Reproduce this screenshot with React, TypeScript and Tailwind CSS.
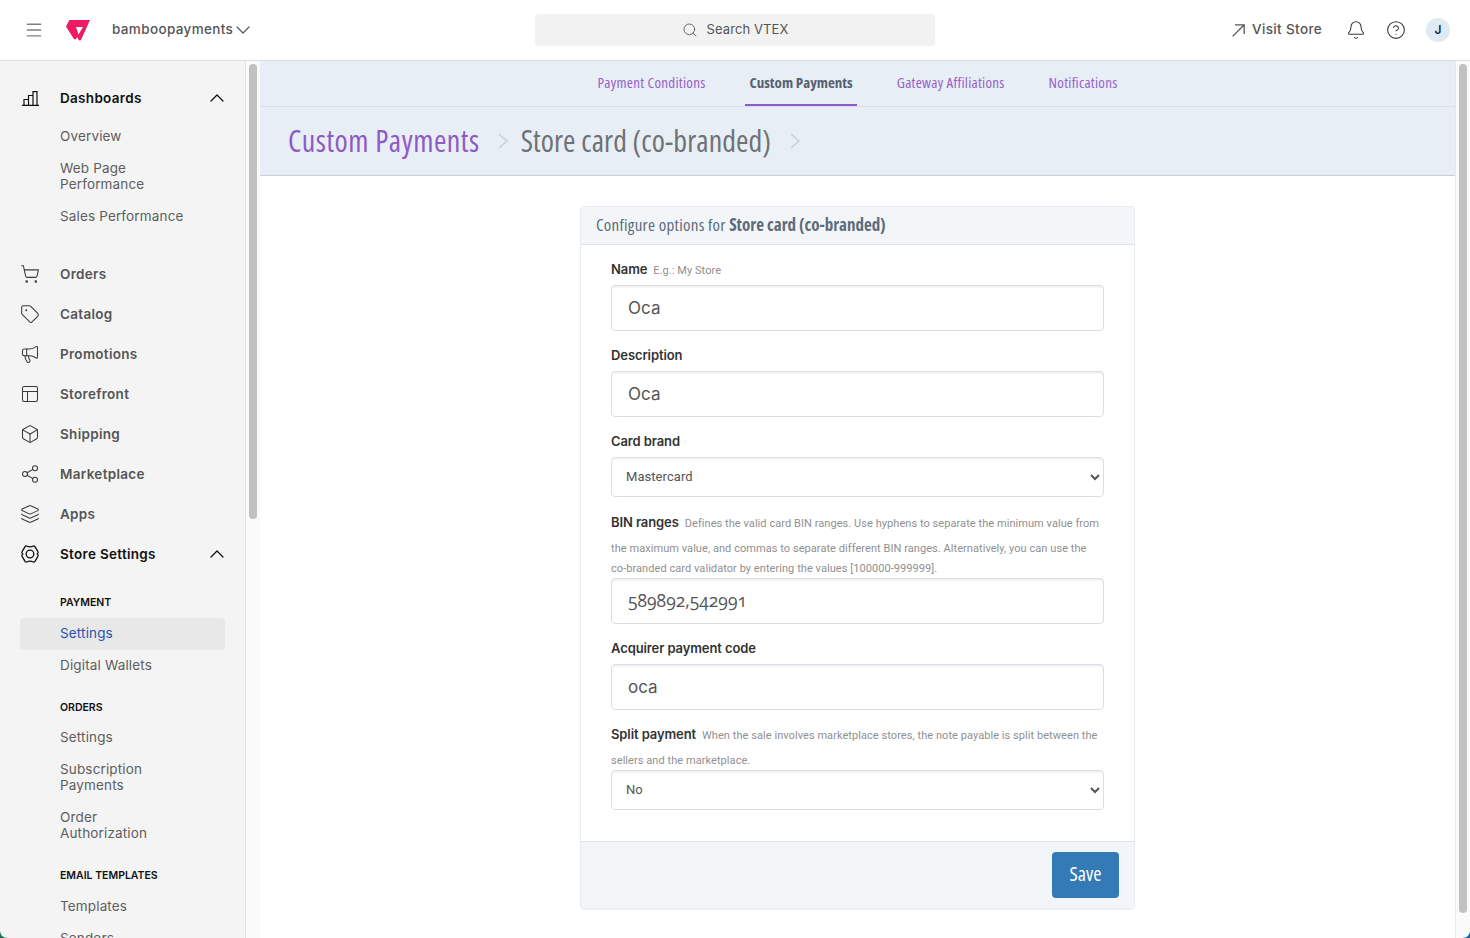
import React from "react";
import { ShoppingCart, Tag, Megaphone, Box, Share2, Layers, ChevronUp, ChevronDown, Search, Bell, CircleHelp, Menu, PanelsTopLeft } from "lucide-react";

const trust = "font-['Inter','Liberation_Sans',sans-serif]";
const narrow = "font-['Open_Sans',sans-serif] [font-stretch:75%]";
const narrowBold = "font-bold tracking-normal";
const hintFont = "font-['Roboto','Liberation_Sans',sans-serif] tracking-[0.06px]";
const labelCls = "mr-[6px] text-[13px] font-semibold tracking-[-0.1px] text-[#333]";

function BarsIcon() {
  return (
    <svg className="ml-[1.5px]" width="17" height="15" viewBox="0 0 17 15" fill="none" stroke="#111" strokeWidth="1.2">
      <path d="M0 14.4H17M2 14.4V8.5H6.5V14.4M6.5 14.4V4.5H11V14.4M11 14.4V0.6H15V14.4" />
    </svg>
  );
}

function Logo() {
  return (
    <svg width="24" height="21" viewBox="0 0 24 21">
      <path
        fill="#f01a5f"
        fillRule="evenodd"
        d="M3.4 0H24L15.2 19.4C14.6 20.8 13 20.8 12.4 19.4L11.2 17 10 19C9.5 19.6 8.2 19.6 7.6 18.6L0 6.6ZM10 7L12.5 14.5 17 7Z"
      />
    </svg>
  );
}

function NavRow({ icon, label, strong, open }: { icon: React.ReactNode; label: string; strong?: boolean; open?: boolean }) {
  return (
    <div className="flex h-10 items-center pl-5 pr-4">
      <span className={`flex w-10 shrink-0 items-center ${strong ? "text-[#111]" : "text-[#3a3a3a]"}`}>{icon}</span>
      <span className={`flex-1 text-[13.5px] font-semibold tracking-[0.3px] ${strong ? "text-[#111]" : "text-[#555]"}`}>{label}</span>
      {open && <ChevronUp size={24} strokeWidth={1.3} className="text-[#111]" />}
    </div>
  );
}

function Sub({ children, active, up }: { children: React.ReactNode; active?: boolean; up?: boolean }) {
  return (
    <div className={`ml-5 mr-5 rounded pl-10 text-[13.5px] leading-4 tracking-[0.15px] ${up ? "pb-[9px] pt-[7px]" : "py-2"} ${active ? "bg-[#e8e8e8] text-[#2953b2]" : "text-[#5e5e5e]"}`}>
      {children}
    </div>
  );
}

function SectionLabel({ children, cls }: { children: React.ReactNode; cls: string }) {
  return <div className={`pl-[60px] text-[10.5px] font-semibold leading-4 text-[#111] ${cls}`}>{children}</div>;
}

function Sidebar() {
  const ic = { size: 20, strokeWidth: 1.25 };
  return (
    <aside className={`flex w-[260px] shrink-0 overflow-hidden ${trust}`}>
      <div className="w-[246px] shrink-0 overflow-hidden border-r border-[#e3e3e3] bg-[#f4f4f4] pt-[17px]">
        <NavRow icon={<BarsIcon />} label="Dashboards" strong open />
        <div className="mt-0.5">
          <Sub>Overview</Sub>
          <Sub>Web Page<br />Performance</Sub>
          <Sub>Sales Performance</Sub>
        </div>
        <div className="mt-[22px]">
          <NavRow icon={<ShoppingCart {...ic} />} label="Orders" />
          <NavRow icon={<Tag {...ic} />} label="Catalog" />
          <NavRow icon={<Megaphone {...ic} />} label="Promotions" />
          <NavRow icon={<PanelsTopLeft {...ic} />} label="Storefront" />
          <NavRow icon={<Box {...ic} />} label="Shipping" />
          <NavRow icon={<Share2 {...ic} />} label="Marketplace" />
          <NavRow icon={<Layers {...ic} />} label="Apps" />
          <NavRow
            icon={
              <svg width="20" height="20" viewBox="0 0 20 20" fill="none" stroke="#111" strokeWidth="1.3">
                <path d="M7.3 2.2C8.5 3 11.5 3 12.7 2.2 13.6 1.7 14.6 2 15.1 2.8L17.9 7.6C18.4 8.4 18.2 9.1 17.6 9.6 17 10 17 10 17.6 10.4 18.2 10.9 18.4 11.6 17.9 12.4L15.1 17.2C14.6 18 13.6 18.3 12.7 17.8 11.5 17 8.5 17 7.3 17.8 6.4 18.3 5.4 18 4.9 17.2L2.1 12.4C1.6 11.6 1.8 10.9 2.4 10.4 3 10 3 10 2.4 9.6 1.8 9.1 1.6 8.4 2.1 7.6L4.9 2.8C5.4 2 6.4 1.7 7.3 2.2Z" />
                <circle cx="10" cy="10" r="3.8" />
              </svg>
            }
            label="Store Settings"
            strong
            open
          />
        </div>
        <SectionLabel cls="pt-[21px] pb-[7px]">PAYMENT</SectionLabel>
        <Sub active up>Settings</Sub>
        <Sub up>Digital Wallets</Sub>
        <SectionLabel cls="pt-[18px] pb-[5px]">ORDERS</SectionLabel>
        <Sub>Settings</Sub>
        <Sub>Subscription<br />Payments</Sub>
        <Sub>Order<br />Authorization</Sub>
        <SectionLabel cls="pt-[19px] pb-[6px]">EMAIL TEMPLATES</SectionLabel>
        <Sub>Templates</Sub>
        <Sub>Senders</Sub>
      </div>
      <div className="w-[14px] shrink-0 bg-[#fafafa] pl-[3px] pt-[3px]">
        <div className="h-[455px] w-2 rounded-full bg-[#c1c1c1]" />
      </div>
    </aside>
  );
}

function Header() {
  return (
    <header className={`flex h-[61px] shrink-0 items-center border-b border-[#dedede] bg-white ${trust}`}>
      <div className="flex w-[535px] shrink-0 items-center">
        <Menu size={20} strokeWidth={1.7} className="ml-6 text-[#808080]" />
        <span className="ml-[22px] flex"><Logo /></span>
        <span className="-mt-px ml-[22px] text-[13.5px] font-medium tracking-[0.35px] text-[#555]">bamboopayments</span>
        <ChevronDown size={24} strokeWidth={1.2} className="-ml-0.5 text-[#555]" />
      </div>
      <div className="flex h-8 w-[400px] items-center justify-center gap-[9px] rounded bg-[#f2f2f2] text-[13px] text-[#555]">
        <Search size={16} strokeWidth={1.3} />
        <span className="-mt-px tracking-[0.1px]">Search VTEX</span>
      </div>
      <div className="flex flex-1 items-center justify-end pr-5 text-[#555]">
        <svg width="13" height="13" viewBox="0 0 13 13" fill="none" stroke="#555" strokeWidth="1.3">
          <path d="M0.6 12.4L12.2 0.8M3 0.8H12.2V10" />
        </svg>
        <span className="-mt-px ml-[7px] text-[13.5px] font-medium tracking-[0.35px]">Visit Store</span>
        <Bell size={20} strokeWidth={1.3} className="ml-6 text-[#3a3a3a]" />
        <CircleHelp size={20} strokeWidth={1.3} className="ml-5 text-[#3a3a3a]" />
        <span className="ml-5 flex h-6 w-6 items-center justify-center rounded-full bg-[#dfeaf5] text-xs font-semibold text-[#142f5c]">J</span>
      </div>
    </header>
  );
}

function Tab({ children, active }: { children: React.ReactNode; active?: boolean }) {
  return (
    <div className={`flex h-[45px] items-center border-b-2 px-1 text-[15px] ${active ? `border-[#8e5bc4] text-[#546170] ${narrowBold}` : "border-transparent tracking-[0.27px] text-[#9461c9]"}`}>
      {children}
    </div>
  );
}

function Label({ title, hint, cls = "" }: { title: string; hint?: string; cls?: string }) {
  return (
    <div className={`text-[11px] text-[#909090] ${hintFont} ${cls}`}>
      <span className={`${labelCls} ${trust}`}>{title}</span>
      {hint}
    </div>
  );
}

function TextInput({ value, cls = "text-[17px]" }: { value: string; cls?: string }) {
  return (
    <input
      readOnly
      value={value}
      className={`block h-[46px] w-full rounded border border-[#d8dfe6] bg-white px-4 text-[#555] shadow-[inset_0_2px_1px_#f3f3f3] outline-none ${cls}`}
    />
  );
}

function SelectBox({ value }: { value: string }) {
  return (
    <select
      value={value}
      onChange={() => {}}
      className={`block h-10 w-full appearance-auto rounded border border-[#d8dfe6] bg-white pb-0.5 pl-[10px] text-[13px] text-[#555] shadow-[inset_0_2px_1px_#f3f3f3] outline-none ${hintFont}`}
    >
      <option>{value}</option>
    </select>
  );
}

function Card() {
  return (
    <div className={`w-[555px] self-start overflow-hidden rounded border border-[#e6ecf2] shadow-[0_1px_1px_#eef1f4] ${trust}`}>
      <div className={`flex h-[38px] items-center border-b border-[#dde4ec] bg-[#f3f6f9] px-[15px] pb-px text-[17px] tracking-[0.28px] text-[#5d6b7a] ${narrow}`}>
        Configure options for&nbsp;<b className={narrowBold}>Store card (co-branded)</b>
      </div>
      <div className="h-[596px] px-[30px] pt-[15px]">
        <Label title="Name" hint="E.g.: My Store" cls="h-6 leading-[18px]" />
        <TextInput value="Oca" cls="mt-px text-[17px]" />
        <Label title="Description" cls="mt-[15px] h-[25px] leading-[18px]" />
        <TextInput value="Oca" />
        <Label title="Card brand" cls="mt-[15px] h-[25px] leading-[18px]" />
        <SelectBox value="Mastercard" />
        <div className={`mt-[13px] text-[11px] leading-[25px] text-[#909090] ${hintFont}`}>
          <span className={`${labelCls} ${trust}`}>BIN ranges</span>
          Defines the valid card BIN ranges. Use hyphens to separate the minimum value from<br />
          the maximum value, and commas to separate different BIN ranges. Alternatively, you can use the
        </div>
        <div className={`mb-[2px] text-[11px] leading-[15px] text-[#909090] ${hintFont}`}>
          co-branded card validator by entering the values [100000-999999].
        </div>
        <TextInput value="589892,542991" cls="pb-0.5 font-['Open_Sans',sans-serif] text-[17.5px] [font-feature-settings:'onum']" />
        <Label title="Acquirer payment code" cls="mt-[15px] h-[25px] leading-[18px]" />
        <TextInput value="oca" />
        <div className={`mt-[12px] h-[48px] text-[11px] leading-[25px] text-[#909090] ${hintFont}`}>
          <span className={`${labelCls} ${trust}`}>Split payment</span>
          When the sale involves marketplace stores, the note payable is split between the<br />
          sellers and the marketplace.
        </div>
        <SelectBox value="No" />
      </div>
      <div className="flex h-[67px] items-center justify-end border-t border-[#dde4ec] bg-[#f3f6f9] pr-[15px]">
        <button className={`h-[46px] w-[67px] rounded bg-[#337ab7] pb-0.5 text-[20px] text-white ${narrow}`}>Save</button>
      </div>
    </div>
  );
}

function Chevron() {
  return (
    <svg width="10" height="18" viewBox="0 0 10 18" fill="none" stroke="#c9ced4" strokeWidth="1.5">
      <path d="M1 2L9 9L1 16" />
    </svg>
  );
}

function Main() {
  return (
    <main className="flex min-w-0 flex-1 flex-col overflow-hidden bg-white">
      <div className={`flex h-[46px] shrink-0 justify-center gap-[36px] border-b border-[#d9dfe6] bg-[#e8eef5] ${narrow}`}>
        <Tab>Payment Conditions</Tab>
        <Tab active>Custom Payments</Tab>
        <Tab>Gateway Affiliations</Tab>
        <Tab>Notifications</Tab>
      </div>
      <div className={`flex h-[69px] shrink-0 items-center border-b border-[#c8ced6] bg-[#e8eef5] pl-7 text-[30px] ${narrow}`}>
        <span className="-mt-0.5 tracking-[0.53px] text-[#8e5bc4]">Custom Payments</span>
        <span className="ml-[18px] mr-[13px] flex"><Chevron /></span>
        <span className="-mt-0.5 tracking-[0.09px] text-[#6f7275]">Store card (co-branded)</span>
        <span className="ml-[19px] flex"><Chevron /></span>
      </div>
      <div className="flex flex-1 justify-center pt-[30px]">
        <Card />
      </div>
    </main>
  );
}

export default function App() {
  return (
    <div className="relative flex h-screen flex-col overflow-hidden bg-white">
      <Header />
      <div className="flex min-h-0 flex-1">
        <Sidebar />
        <Main />
        <div className="w-[15px] shrink-0 border-l border-[#e8e8e8] bg-[#fafafa] pl-[3px] pt-[3px]">
          <div className="h-[849px] w-2 rounded-full bg-[#c1c1c1]" />
        </div>
      </div>
      <svg className="absolute bottom-0 left-0" width="8" height="8" viewBox="0 0 8 8">
        <path d="M0 0C0 5 3 8 8 8H0Z" fill="#1f6f52" />
      </svg>
      <svg className="absolute bottom-0 right-0" width="8" height="8" viewBox="0 0 8 8">
        <path d="M8 0C8 5 5 8 0 8H8Z" fill="#2465a8" />
      </svg>
    </div>
  );
}
